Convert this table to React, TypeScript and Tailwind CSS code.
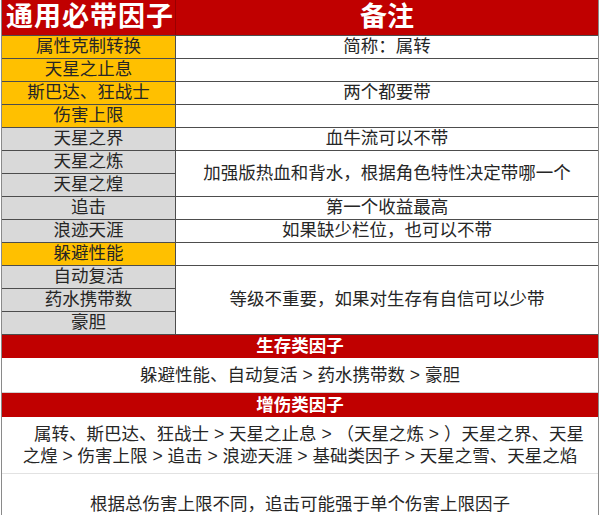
const font = "font-['Liberation_Sans','Noto_Sans_CJK_SC',sans-serif]";

const YELLOW = 'bg-[#ffc000]';
const GRAY = 'bg-[#d9d9d9]';

const factors = [
  { name: '属性克制转换', bg: YELLOW },
  { name: '天星之止息', bg: YELLOW },
  { name: '斯巴达、狂战士', bg: YELLOW },
  { name: '伤害上限', bg: YELLOW },
  { name: '天星之界', bg: GRAY },
  { name: '天星之炼', bg: GRAY },
  { name: '天星之煌', bg: GRAY },
  { name: '追击', bg: GRAY },
  { name: '浪迹天涯', bg: GRAY },
  { name: '躲避性能', bg: YELLOW },
  { name: '自动复活', bg: GRAY },
  { name: '药水携带数', bg: GRAY },
  { name: '豪胆', bg: GRAY },
];

// note column: text + how many rows it covers
const notes = [
  { text: '简称：属转', span: 1 },
  { text: '', span: 1 },
  { text: '两个都要带', span: 1 },
  { text: '', span: 1 },
  { text: '血牛流可以不带', span: 1 },
  { text: '加强版热血和背水，根据角色特性决定带哪一个', span: 2 },
  { text: '第一个收益最高', span: 1 },
  { text: '如果缺少栏位，也可以不带', span: 1 },
  { text: '', span: 1 },
  { text: '等级不重要，如果对生存有自信可以少带', span: 3 },
];

const spanClass: Record<number, string> = {
  1: 'row-span-1',
  2: 'row-span-2',
  3: 'row-span-3',
};

export default function App() {
  let row = 2;
  const notePlaced = notes.map((n) => {
    const start = row;
    row += n.span;
    return { ...n, start };
  });

  return (
    <div className={`w-[600px] h-[515px] overflow-hidden bg-white text-[#262626] ${font}`}>
      <div className="ml-px w-[598px] border-x border-[#8a8a8a]">
        <div className="grid grid-cols-[174px_1fr] grid-rows-[35px_repeat(13,23px)]">
          <div className="col-start-1 row-start-1 flex items-center pl-[4px] bg-[#c00000] border-r border-[#9a0000] text-white font-bold text-[27px] tracking-[1px]">
            通用必带因子
          </div>
          <div className="col-start-2 row-start-1 flex items-center justify-center bg-[#c00000] text-white font-bold text-[27px]">
            备注
          </div>

          {factors.map((f, i) => (
            <div
              key={f.name}
              className={`col-start-1 flex items-center justify-center border-t border-r border-[#4d4d4d] text-[17.5px] leading-none ${f.bg}`}
              style={{ gridRowStart: i + 2 }}
            >
              {f.name}
            </div>
          ))}

          {notePlaced.map((n) => (
            <div
              key={n.start}
              className={`col-start-2 flex items-center justify-center border-t border-[#4d4d4d] text-[17.5px] leading-none ${spanClass[n.span]}`}
              style={{ gridRowStart: n.start }}
            >
              {n.text}
            </div>
          ))}
        </div>

        <div className="h-[24px] flex items-center justify-center bg-[#c00000] border-t border-[#4d4d4d] text-white font-bold text-[17.5px]">
          生存类因子
        </div>
        <div className="h-[35px] flex items-center justify-center text-[17.5px] border-b border-[#d0d0d0]">
          躲避性能、自动复活 &gt; 药水携带数 &gt; 豪胆
        </div>
        <div className="h-[24px] flex items-center justify-center bg-[#c00000] text-white font-bold text-[17.5px]">
          增伤类因子
        </div>
        <div className="h-[57px] flex flex-col items-center justify-center text-[17.5px] leading-[22px] border-b border-[#e2e2e2]">
          <span className="pl-[18px]">属转、斯巴达、狂战士 &gt; 天星之止息 &gt; （天星之炼 &gt; ）天星之界、天星</span>
          <span>之煌 &gt; 伤害上限 &gt; 追击 &gt; 浪迹天涯 &gt; 基础类因子 &gt; 天星之雪、天星之焰</span>
        </div>
        <div className="h-[60px] flex justify-center pt-[22px] text-[17.5px] leading-none">
          根据总伤害上限不同，追击可能强于单个伤害上限因子
        </div>
      </div>
    </div>
  );
}
